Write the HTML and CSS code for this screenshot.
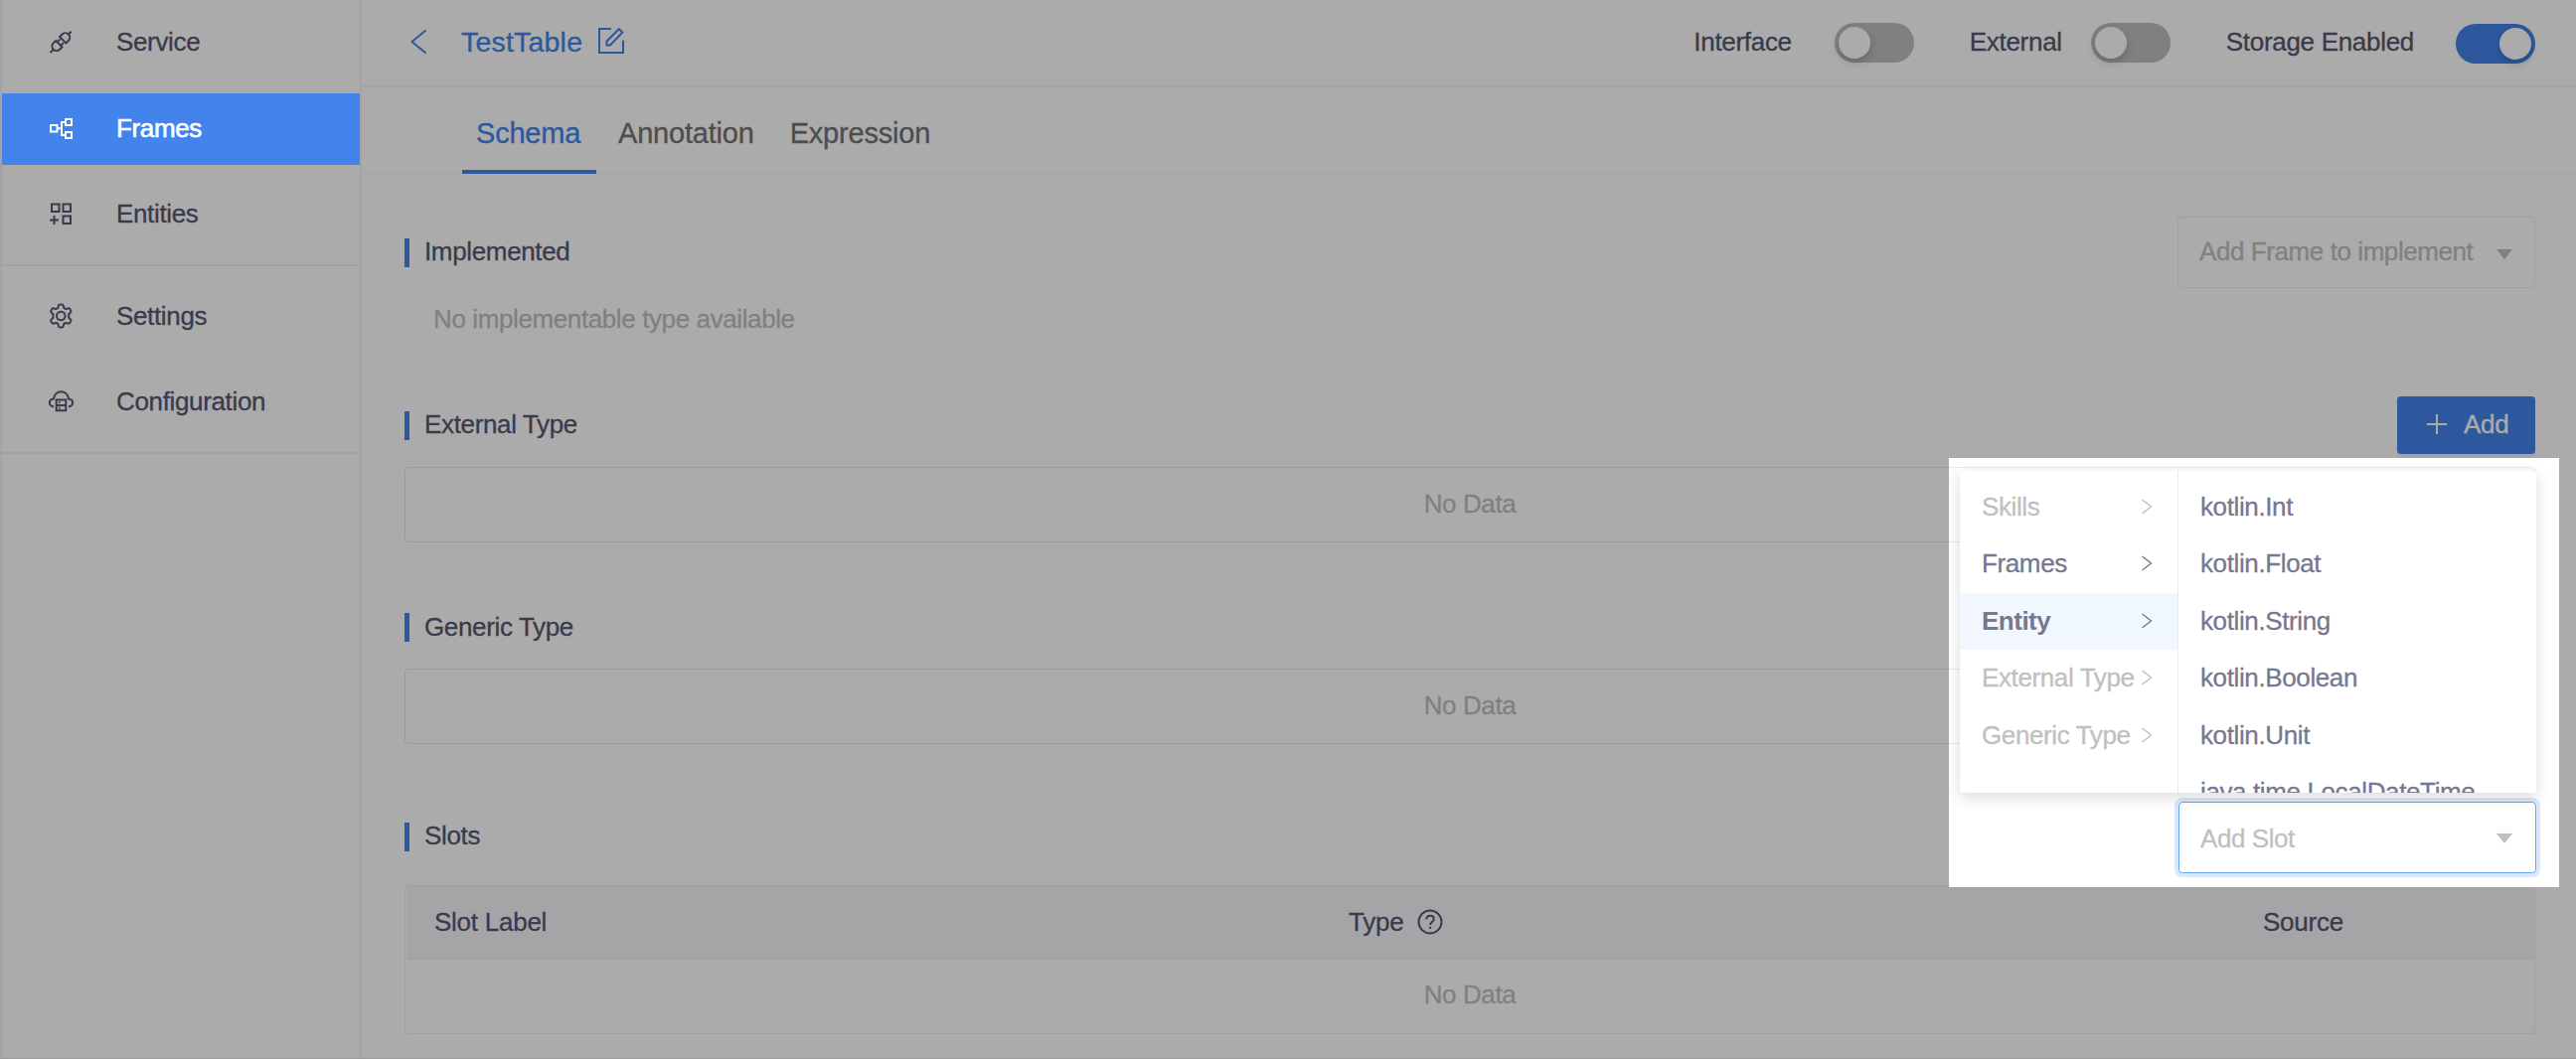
FILE: index.html
```html
<!DOCTYPE html>
<html lang="en">
<head>
<meta charset="utf-8">
<title>TestTable</title>
<link rel="stylesheet" href="styles.css">
</head>
<body>
<div class="app">
  <nav class="sidebar">
    <div class="group group-main">
      <a class="item">
        <svg class="ico" viewBox="0 0 26 26"><g transform="translate(13.500 13) rotate(-45)"><path d="M-15.500 0h4M-3-5.500v11M-3-4.500h-3.500a4.500 4.500 0 0 0 0 9H-3M-3-2.500h4M-3 2.500h4M2.500-5.500v11M2.500-4.500H6a4.500 4.500 0 0 1 0 9H2.500M10.500 0h4"/></g></svg>
        <span>Service</span></a>
      <a class="item active">
        <svg class="ico" viewBox="0 0 26 26"><path d="M3 10h6.500v6.500H3zM18 4h6v6h-6zM18 17h6v6h-6zM9.500 13.300H14M18 7h-4v13h4"/></svg>
        <span>Frames</span></a>
      <a class="item">
        <svg class="ico" viewBox="0 0 26 26"><path d="M4 3.500h7.500V11H4zM15.500 3.500H23V11h-7.500zM15.500 15.500H23V23h-7.500zM2 19.500h9M6.500 15v9"/></svg>
        <span>Entities</span></a>
    </div>
    <div class="group">
      <a class="item">
        <svg class="ico gear" viewBox="0 0 26 26"><circle cx="13.300" cy="13" r="4.300"/><path d="M10.800 3q.4-1.500 1.500-1.500h2q1.100 0 1.500 1.500l.5 2 2 1.100 2-.6q1.500-.4 2 .5l1 1.700q.5 1-.6 2l-1.500 1.500v3.600l1.500 1.500q1.100 1 .6 2l-1 1.700q-.5.900-2 .5l-2-.6-2 1.100-.5 2q-.4 1.500-1.500 1.500h-2q-1.100 0-1.500-1.500l-.5-2-2-1.100-2 .6q-1.500.4-2-.5l-1-1.700q-.5-1 .6-2l1.500-1.500v-3.600L3.900 9.700q-1.100-1-.6-2l1-1.700q.5-.9 2-.5l2 .6 2-1.100z"/></svg>
        <span>Settings</span></a>
      <a class="item">
        <svg class="ico" viewBox="0 0 26 26"><path d="M6 18.500C0 17 1 11 6 10.500 7.500 .8 19.500 .8 21 10.500c5 .5 6 6.500 0 8M8.700 11.500h9.600v10.800H8.700zM8.700 17h9.600M11 14.200h1.500M11 19.700h1.500"/></svg>
        <span>Configuration</span></a>
    </div>
  </nav>

  <main class="main">
    <header class="topbar">
      <svg class="back" viewBox="0 0 18 26"><path d="M16.500 1.500L2.500 13l14 11.500"/></svg>
      <h1 class="title">TestTable</h1>
      <svg class="edit" viewBox="0 0 28 28"><path d="M14 2H2v24h24V13.500M9.500 18.500v-4L21.800 2.200l3.600 3.300L13 18.500z"/></svg>
      <label class="toggle">Interface <i class="switch"></i></label>
      <label class="toggle">External <i class="switch"></i></label>
      <label class="toggle">Storage Enabled <i class="switch on"></i></label>
    </header>
    <div class="tabs">
      <a class="tab current">Schema</a>
      <a class="tab">Annotation</a>
      <a class="tab">Expression</a>
    </div>

    <div class="content">
      <section class="implemented">
        <div class="head">
          <h2>Implemented</h2>
          <div class="select">Add Frame to implement<svg class="caret" viewBox="0 0 16 10"><path d="M0 0h16L8 10z"/></svg></div>
        </div>
        <p class="hint">No implementable type available</p>
      </section>
      <section class="external">
        <div class="head">
          <h2>External Type</h2>
          <button class="add"><svg viewBox="0 0 20 20"><path d="M10 0v20M0 10h20"/></svg>Add</button>
        </div>
        <div class="empty">No Data</div>
      </section>
      <section class="generic">
        <h2>Generic Type</h2>
        <div class="empty">No Data</div>
      </section>
      <section class="slots">
        <h2>Slots</h2>
        <div class="table">
          <div class="thead">
            <span>Slot Label</span>
            <span>Type <svg class="help" viewBox="0 0 26 26"><circle cx="13" cy="13" r="11.500"/><path d="M9.300 10.500c0-5 7.500-4.700 7.500-.3 0 2.800-3.700 2.800-3.700 5.800M13.100 17.800v2.200"/></svg></span>
            <span>Source</span>
          </div>
          <div class="nodata">No Data</div>
        </div>
      </section>
    </div>
  </main>
</div>

<div class="spotlight">
  <div class="cascader">
    <ul class="types">
      <li class="off">Skills<svg class="chev" viewBox="0 0 12 16"><path d="M1.500 1L10.500 8l-9 7"/></svg></li>
      <li>Frames<svg class="chev" viewBox="0 0 12 16"><path d="M1.500 1L10.500 8l-9 7"/></svg></li>
      <li class="chosen">Entity<svg class="chev" viewBox="0 0 12 16"><path d="M1.500 1L10.500 8l-9 7"/></svg></li>
      <li class="off">External Type<svg class="chev" viewBox="0 0 12 16"><path d="M1.500 1L10.500 8l-9 7"/></svg></li>
      <li class="off">Generic Type<svg class="chev" viewBox="0 0 12 16"><path d="M1.500 1L10.500 8l-9 7"/></svg></li>
    </ul>
    <ul class="values">
      <li>kotlin.Int</li>
      <li>kotlin.Float</li>
      <li>kotlin.String</li>
      <li>kotlin.Boolean</li>
      <li>kotlin.Unit</li>
      <li>java.time.LocalDateTime</li>
    </ul>
  </div>
  <div class="select focus">Add Slot<svg class="caret" viewBox="0 0 16 10"><path d="M0 0h16L8 10z"/></svg></div>
</div>
</body>
</html>
```

FILE: styles.css
```css
* { box-sizing: border-box; }
body {
  margin: 0;
  width: 2592px;
  height: 1066px;
  overflow: hidden;
  position: relative;
  background: #fff;
  color: #575770;
  font: 26px/30px "Liberation Sans", Arial, sans-serif;
  letter-spacing: -0.35px;
  -webkit-text-stroke: 0.3px currentColor;
}
h1, h2, p, ul { margin: 0; padding: 0; font-weight: normal; }
svg { fill: none; stroke: currentColor; stroke-width: 2; flex: none; }
.app { display: flex; height: 1066px; border-bottom: 1px solid #e8e8ee; }

.sidebar { width: 364px; flex: none; border: solid #f2f2ff; border-width: 0 2px; }
.group {
  display: flex;
  flex-direction: column;
  gap: 14px;
  padding: 15px 0 14px;
  border-bottom: 2px solid #f0f0f0;
}
.group-main { padding-top: 6px; }
.group-main .item:first-child { height: 74px; }
.item { display: flex; align-items: center; gap: 43px; height: 72px; padding: 0 0 2px 46px; }
.ico { width: 26px; height: 26px; }
.gear { stroke-linejoin: round; }
.active { position: relative; z-index: 2; background: #4384ec; color: #fff; -webkit-text-stroke-width: 0.6px; }

.main { flex: 1; min-width: 0; }
.topbar {
  display: flex;
  align-items: center;
  height: 88px;
  padding: 0 41px 3px 48px;
  border-bottom: 2px solid #f2f2ff;
}
.back { width: 18px; height: 26px; color: #4384ec; }
.title { margin: 1px 0 0 34px; font-size: 28.5px; color: #4384ec; letter-spacing: 0.2px; }
.edit { width: 28px; height: 28px; margin: 0 auto 2px 15px; color: #4384ec; }
.toggle { display: flex; align-items: center; margin-left: 56px; letter-spacing: -0.3px; }
.switch {
  display: flex;
  width: 80px;
  height: 40px;
  margin: 3px 0 0 29px;
  padding: 4px;
  border-radius: 20px;
  background: #bfbfbf;
}
.toggle:first-of-type .switch { margin-left: 43px; }
.toggle:last-of-type .switch { margin: 5px 0 0 42px; }
.switch::after { content: ""; width: 32px; height: 32px; border-radius: 50%; background: #fff; box-shadow: 0 4px 8px rgba(0, 35, 11, .2); }
.switch.on { justify-content: flex-end; background: #4384ec; }

.tabs { display: flex; height: 87px; padding-left: 101px; gap: 8px; border-bottom: 1px solid #f0f0f0; }
.tab { padding: 31px 14px 0; height: 87px; font-size: 29px; letter-spacing: -0.2px; color: #737373; }
.current { width: 135px; margin-bottom: -1px; border-bottom: 4px solid #4384ec; color: #4384ec; }

.content { padding: 43px 41px 0 43px; }
section { display: flex; flex-direction: column; }
.head { display: flex; align-items: center; justify-content: space-between; }
h2 { height: 29px; padding-left: 15px; border-left: 5px solid #4384ec; font-size: 26px; line-height: 27px; }
.select {
  display: flex;
  align-items: center;
  justify-content: space-between;
  width: 360px;
  height: 72px;
  padding: 0 22px 2px 21px;
  border: 1px solid #eeeef6;
  border-radius: 4px;
  color: #bfbfbf;
  letter-spacing: -0.42px;
}
.caret { width: 16px; height: 10px; fill: currentColor; stroke: none; margin-top: 5px; }
.hint { margin: 16px 0 0 29px; color: #bfbfbf; letter-spacing: -0.39px; }
.external { margin-top: 63px; }
.add {
  display: flex;
  align-items: center;
  gap: 17px;
  width: 139px;
  height: 58px;
  padding: 0 0 2px 30px;
  border: 0;
  border-radius: 4px;
  background: #4384ec;
  box-shadow: 0 4px 0 rgba(0, 0, 0, .04);
  color: #fff;
  font: inherit;
  letter-spacing: -0.25px;
}
.add svg { width: 20px; height: 20px; }
.empty {
  display: flex;
  align-items: center;
  justify-content: center;
  height: 76px;
  margin-top: 13px;
  padding-bottom: 2px;
  border: 1px solid #e8e8f4;
  border-radius: 4px;
  color: #bfbfbf;
}
.generic { margin-top: 71px; }
.generic h2 { line-height: 28px; }
.generic .empty { margin-top: 27px; }
.slots { margin-top: 79px; }
.table { margin-top: 34px; border: 1px solid #ececf4; border-radius: 4px; }
.thead {
  display: grid;
  grid-template-columns: 920px 920px 1fr;
  align-items: center;
  height: 74px;
  margin: 0 1px;
  padding-bottom: 2px;
  background: #f7f7fa;
  border-bottom: 1px solid #f0f0f6;
  letter-spacing: -0.25px;
}
.thead span { display: flex; align-items: center; gap: 14px; padding-left: 28px; }
.help { width: 26px; height: 26px; }
.nodata { height: 74px; line-height: 70px; text-align: center; color: #bfbfbf; }
.nodata, .empty { letter-spacing: -0.4px; }

/* Highlighted region; everything outside it is dimmed by the spread shadow */
.spotlight {
  position: absolute;
  z-index: 1;
  left: 1961px;
  top: 461px;
  width: 614px;
  height: 432px;
  padding: 13px 0 0 11px;
  box-shadow: 0 0 0 3000px rgba(0, 0, 0, .33);
  background: linear-gradient(#fff, #fff) 0 337px / 100% 95px no-repeat;
}
.cascader {
  position: relative;
  z-index: 1;
  display: flex;
  width: 580px;
  height: 324px;
  overflow: hidden;
  border-radius: 4px;
  background: #fff;
}
.spotlight::before {
  content: "";
  position: absolute;
  left: 11px;
  top: 13px;
  width: 580px;
  height: 324px;
  border-radius: 4px;
  box-shadow: 0 4px 16px rgba(0, 0, 0, .15);
}
.cascader ul { list-style: none; padding-top: 7.5px; color: #77778f; }
.cascader li {
  display: flex;
  align-items: center;
  justify-content: space-between;
  height: 57.5px;
  padding: 0 25px 1px 22px;
  white-space: nowrap;
  letter-spacing: -0.38px;
}
.types { width: 220px; flex: none; border-right: 1px solid #ececf0; }
.types .off { color: #c0c0c0; }
.types .chosen { background: #f0f7ff; font-weight: bold; letter-spacing: -0.5px; -webkit-text-stroke-width: 0; }
.chev { width: 12px; height: 16px; stroke-width: 1.4; }
.focus {
  width: 360px;
  margin: 9px 0 0 220px;
  padding: 1px 23px 0 21px;
  border-color: #69a2f5;
  box-shadow: 0 0 0 4px rgba(67, 132, 236, .2);
}
.focus .caret { margin-top: 0; }
```
